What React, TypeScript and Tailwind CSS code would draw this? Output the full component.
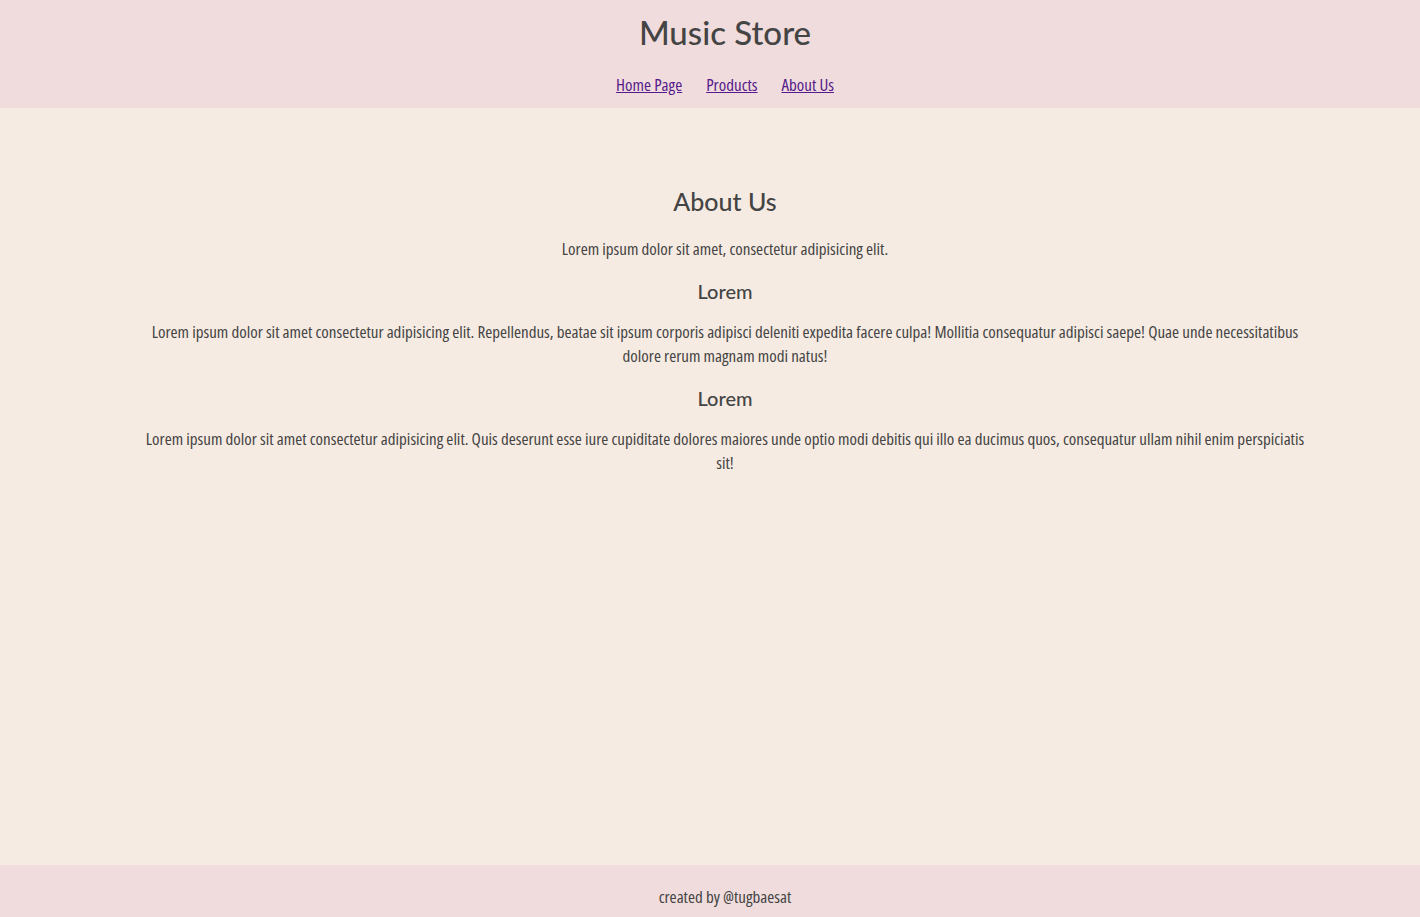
const App = () => {
  const sections = [
    {
      title: 'Lorem',
      text: 'Lorem ipsum dolor sit amet consectetur adipisicing elit. Repellendus, beatae sit ipsum corporis adipisci deleniti expedita facere culpa! Mollitia consequatur adipisci saepe! Quae unde necessitatibus dolore rerum magnam modi natus!',
    },
    {
      title: 'Lorem',
      text: 'Lorem ipsum dolor sit amet consectetur adipisicing elit. Quis deserunt esse iure cupiditate dolores maiores unde optio modi debitis qui illo ea ducimus quos, consequatur ullam nihil enim perspiciatis sit!',
    },
  ];

  return (
    <div className="flex min-h-screen flex-col bg-[#f6ebe2] font-['Open_Sans',sans-serif] font-stretch-condensed text-[#444444]">
      <header className="flex h-[108px] flex-col items-center bg-[#f0dcdc] pl-[30px]">
        <h1 className="mt-[13px] font-['Lato',sans-serif] text-[33px] leading-[38px] font-medium">
          Music Store
        </h1>
        <nav className="mt-[22px] flex gap-6 text-[17px] leading-[24px]">
          <a href="#" className="text-[#551a8b] underline">Home Page</a>
          <a href="#" className="text-[#551a8b] underline">Products</a>
          <a href="#" className="text-[#551a8b] underline">About Us</a>
        </nav>
      </header>

      <main className="flex flex-1 flex-col items-center pl-[30px] pt-[77px]">
        <div className="flex w-[1160px] flex-col items-center text-center">
          <h2 className="font-['Lato',sans-serif] text-[25px] leading-[32px] font-medium">
            About Us
          </h2>
          <p className="mt-[20px] text-[17px] leading-[24px]">
            Lorem ipsum dolor sit amet, consectetur adipisicing elit.
          </p>
          {sections.map((s, i) => (
            <div key={i} className="flex flex-col items-center">
              <h3 className="mt-[17px] font-['Lato',sans-serif] text-[20px] leading-[26px] font-medium">
                {s.title}
              </h3>
              <p className="mt-[16px] text-[17px] leading-[24px]">{s.text}</p>
            </div>
          ))}
        </div>
      </main>

      <footer className="flex h-[52px] items-center justify-center bg-[#f0dcdc] pl-[30px] pt-[12px] text-[17px]">
        created by @tugbaesat
      </footer>
    </div>
  );
};

export default App;
